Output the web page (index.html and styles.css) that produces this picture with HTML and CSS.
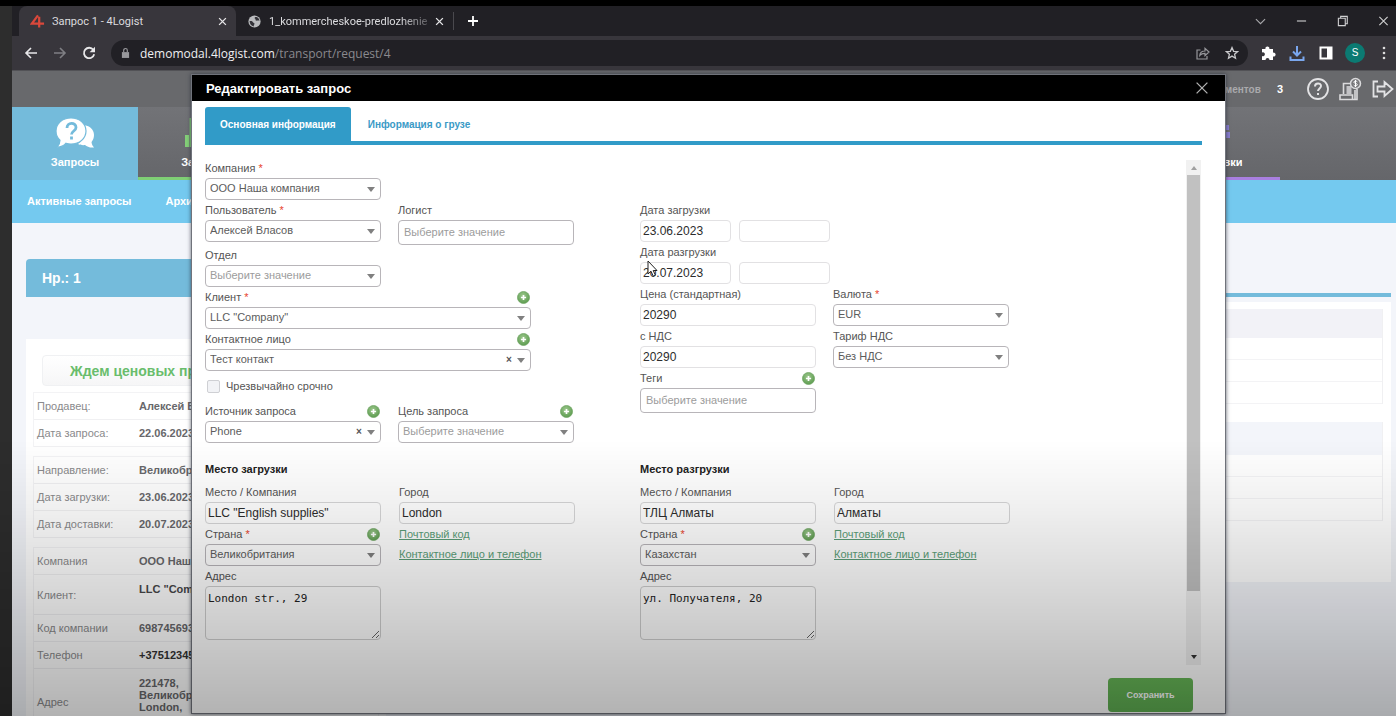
FILE: index.html
```html
<!DOCTYPE html>
<html lang="ru">
<head>
<meta charset="utf-8">
<title>Запрос 1 - 4Logist</title>
<link rel="stylesheet" href="styles.css">
</head>
<body>
<svg class="defs" aria-hidden="true">
  <defs>
    <radialGradient id="plus-fill" cx="45%" cy="35%" r="65%"><stop offset="0" stop-color="#9cc78c"/><stop offset="1" stop-color="#5d9c50"/></radialGradient>
    <symbol id="plus" viewBox="0 0 14 14"><circle cx="7" cy="7" r="6.5" fill="url(#plus-fill)" stroke="#6fa463" stroke-width=".8"/><path d="M7 4.200v5.600M4.200 7h5.600" stroke="#fff" stroke-width="1.800"/></symbol>
    <symbol id="close" viewBox="0 0 12 12"><path d="M1.500 1.500l9 9M10.500 1.500l-9 9" fill="none" stroke="currentColor" stroke-width="1.800"/></symbol>
  </defs>
</svg>

<div class="window">
  <header class="tabstrip">
    <div class="tab tab-active">
      <svg class="fav" viewBox="0 0 16 16"><path d="M8.500 1.500L2 10.200h13M9.800 3v11.500" fill="none" stroke="#d9483b" stroke-width="2.400"/></svg>
      <span class="tab-title">Запрос 1 - 4Logist</span>
      <button class="tab-close" aria-label="Закрыть вкладку"><svg viewBox="0 0 12 12"><use href="#close"/></svg></button>
    </div>
    <div class="tab">
      <svg class="fav" viewBox="0 0 16 16"><circle cx="8" cy="8" r="6.500" fill="#b9babd"/><path d="M2.800 7.500c2-.3 3 .2 3.600 1.200.5.900 1.600.6 1.600 1.800 0 .9-.8 1-.8 2.700-2.600-.3-4.500-2.800-4.400-5.700zM9.500 2.800c-1.600.7-1.700 1.600-.8 2.200.9.600-.2 1.400.9 2 1 .5 2-.5 3.700.2-.2-2.400-1.600-3.900-3.800-4.400z" fill="#333238"/></svg>
      <span class="tab-title tab-fade">1_kommercheskoe-predlozhenie</span>
      <button class="tab-close" aria-label="Закрыть вкладку"><svg viewBox="0 0 12 12"><use href="#close"/></svg></button>
    </div>
    <button class="new-tab" aria-label="Новая вкладка"><svg viewBox="0 0 12 12"><path d="M6 1v10M1 6h10" stroke="#fff" stroke-width="1.800"/></svg></button>
    <div class="win-buttons">
      <button aria-label="Поиск вкладок"><svg viewBox="0 0 12 12"><path d="M1 4l5 5 5-5" fill="none" stroke="#a9a9ac" stroke-width="1.200"/></svg></button>
      <button aria-label="Свернуть"><svg viewBox="0 0 12 12"><path d="M1 6h10" stroke="#d0d0d2" stroke-width="1.200"/></svg></button>
      <button aria-label="Окно"><svg viewBox="0 0 12 12"><path d="M1.500 3h7.500v8H1.500zM4 3V1h7.200v8H9" fill="none" stroke="#d0d0d2" stroke-width="1.200"/></svg></button>
      <button aria-label="Закрыть"><svg viewBox="0 0 12 12"><path d="M1.500 1.500l9 9M10.500 1.500l-9 9" stroke="#d0d0d2" stroke-width="1.200"/></svg></button>
    </div>
  </header>

  <div class="toolbar">
    <button class="nav-btn" aria-label="Назад"><svg viewBox="0 0 14 14"><path d="M13 7H2M7 2L2 7l5 5" fill="none" stroke="#e8e8ea" stroke-width="1.600"/></svg></button>
    <button class="nav-btn" aria-label="Вперёд"><svg viewBox="0 0 14 14"><path d="M1 7h11M7 2l5 5-5 5" fill="none" stroke="#7f7f84" stroke-width="1.600"/></svg></button>
    <button class="nav-btn" aria-label="Обновить"><svg viewBox="0 0 14 14"><path d="M11.300 3.800A5.200 5.200 0 1 0 12.200 8.300" fill="none" stroke="#e8e8ea" stroke-width="1.800"/><path d="M13 .8v5.400H7.600z" fill="#e8e8ea"/></svg></button>
    <div class="omnibox">
      <svg class="lock" viewBox="0 0 10 12"><path d="M1 5h8v6.500H1z" fill="#98989c"/><path d="M3 5V3a2 2 0 0 1 4 0v2" fill="none" stroke="#98989c" stroke-width="1.300"/></svg>
      <span class="url"><b>demomodal.4logist.com</b>/transport/request/4</span>
      <svg class="omni-icon" viewBox="0 0 14 14"><path d="M4.500 4H1v9h10v-3M3.800 9.500C4 6.500 6 5 9 5V2.300L13 6 9 9.700V7.300C6.800 7.200 5 8 3.800 9.500z" fill="none" stroke="#97979b" stroke-width="1.200"/></svg>
      <svg class="omni-icon" viewBox="0 0 14 14"><path d="M7 1.600l1.600 3.700 4 .3-3 2.700.9 3.900L7 10.100l-3.500 2.100.9-3.900-3-2.700 4-.3z" fill="none" stroke="#c9c9cc" stroke-width="1.300"/></svg>
    </div>
    <div class="ext">
      <svg viewBox="0 0 16 16"><path d="M2 4h3.500a2 2 0 1 1 3.800 0H13v3.700a2 2 0 1 1 0 3.800V15H9.500a2 2 0 1 0-4 0H2v-4a2 2 0 1 0 0-3.600z" fill="#fff"/></svg>
      <svg viewBox="0 0 16 16"><path d="M8 1v9M4 6.500l4 4 4-4M1.500 11.500V15h13v-3.500" fill="none" stroke="#7aa7ee" stroke-width="2"/></svg>
      <svg viewBox="0 0 16 16"><path d="M2.500 2.500h11v11h-11z" fill="none" stroke="#fff" stroke-width="2"/><path d="M9 2h5v12H9z" fill="#fff"/></svg>
      <span class="avatar">S</span>
      <svg viewBox="0 0 16 16"><circle cx="8" cy="3" r="1.300" fill="#ddd"/><circle cx="8" cy="8" r="1.300" fill="#ddd"/><circle cx="8" cy="13" r="1.300" fill="#ddd"/></svg>
    </div>
  </div>

  <div class="page">
    <div class="app-top">
      <span class="docs">Документов</span>
      <b class="count">3</b>
      <svg viewBox="0 0 24 24"><circle cx="12" cy="12" r="10" fill="none" stroke="#e3e3e5" stroke-width="1.800"/><path d="M9 9.500c0-4 6-4 6-.4 0 2.400-3 2.400-3 5M12 16v2" fill="none" stroke="#e3e3e5" stroke-width="2"/></svg>
      <svg viewBox="0 0 24 24"><path d="M5.500 17V6.500H13M17 13v9M2 18h12.500v4.500H2zM14.500 22.500H19V12" fill="none" stroke="#dadadc" stroke-width="1.600"/><path d="M8.500 9h5v8h-5z" fill="#c3c3c6"/><circle cx="17.500" cy="6.500" r="5" fill="#77777a" stroke="#dadadc" stroke-width="1.500"/><path d="M19.300 4.800c-.6-1-3.500-1-3.500.4s3.500 1 3.500 2.500-3 1.600-3.600.4M17.500 3v7" fill="none" stroke="#fff" stroke-width="1"/></svg>
      <svg viewBox="0 0 24 24"><path d="M8 4.500H3.500v15H8M7.500 9.500h7V5l8 7-8 7v-4.500h-7z" fill="none" stroke="#e3e3e5" stroke-width="1.800"/></svg>
    </div>
    <nav class="main-nav">
      <a class="nav-item nav-active" href="#"><svg viewBox="0 0 40 32"><path d="M27 8c7 0 12 4 12 10 0 3-1 5-2.500 7 .3 2.500 1.200 4 2.500 5.500-4 .5-7-.8-9-2.500-1 .3-5 .3-7-1 7-4 9-12 4-19z" fill="#fff"/><path d="M16 1c9 0 15 6 15 13s-6 13-15 13c-2 0-3.500-.3-5-.8-2 2.500-5 4-9 4 2-2 3-4 3-7C2.500 21 1 18 1 14 1 7 7 1 16 1z" fill="#fff" stroke="#74bbdb" stroke-width="1.200"/><path d="M12 11c0-6 9-6 9-.5 0 3.500-4.500 3.500-4.500 7M16.500 19.500v3" fill="none" stroke="#74bbdb" stroke-width="2.800"/></svg><span>Запросы</span></a>
      <a class="nav-item nav-green" href="#"><svg viewBox="0 0 40 32"><path d="M4 18h4v12H4zM8.600 1H17v29H8.600zM20 10h8v20h-8z" fill="#84cf78"/></svg><span>Заказы</span></a>
      <a class="nav-item nav-purple" href="#"><svg viewBox="0 0 40 32"><path d="M7 7h19v14H7zM28 8h4v5h-4zM29 15h4v6h-4z" fill="#8a7fd0"/></svg><span>Доставки</span></a>
    </nav>
    <nav class="sub-nav"><a href="#">Активные запросы</a><a href="#">Архив запросов</a></nav>

    <main class="content">
      <section class="request">
        <h1 class="request-title">Нр.: 1</h1>
        <div class="card">
          <div class="status">Ждем ценовых предложений</div>
          <table class="info">
            <tr><th>Продавец:</th><td>Алексей Власов</td></tr>
            <tr><th>Дата запроса:</th><td>22.06.2023</td></tr>
          </table>
          <table class="info">
            <tr><th>Направление:</th><td>Великобритания</td></tr>
            <tr><th>Дата загрузки:</th><td>23.06.2023</td></tr>
            <tr><th>Дата доставки:</th><td>20.07.2023</td></tr>
          </table>
          <table class="info">
            <tr><th>Компания</th><td>ООО Наша компания</td></tr>
            <tr class="row-mid"><th>Клиент:</th><td>LLC "Company"</td></tr>
            <tr><th>Код компании</th><td>698745693</td></tr>
            <tr><th>Телефон</th><td class="dark">+375123456</td></tr>
            <tr class="row-tall"><th>Адрес</th><td>221478,<br>Великобритания,<br>London,</td></tr>
          </table>
        </div>
      </section>
      <section class="details">
        <div class="details-line"></div>
        <div class="panel">
          <div class="grid-block"><div class="grid-head"></div><div class="grid-row"></div><div class="grid-row"></div><div class="grid-row"></div></div>
          <div class="grid-block"><div class="grid-head grid-head-tall"></div><div class="grid-row"></div><div class="grid-row"></div><div class="grid-row"></div></div>
        </div>
      </section>
    </main>

    <div class="modal" role="dialog" aria-labelledby="modal-title">
      <div class="modal-head">
        <h2 id="modal-title">Редактировать запрос</h2>
        <button class="modal-close" aria-label="Закрыть"><svg viewBox="0 0 12 12"><path d="M.6.600l10.800 10.800M11.400.600L.6 11.400" stroke="#b0b0b0" stroke-width="1.300"/></svg></button>
      </div>
      <div class="modal-tabs">
        <button class="mtab mtab-active">Основная информация</button>
        <button class="mtab">Информация о грузе</button>
      </div>
      <div class="modal-body">
        <form class="form" id="request-form">
          <div class="half">
            <div class="pair">
              <div class="field"><div class="cap"><label for="company">Компания <i>*</i></label></div><div class="sel"><select id="company"><option>ООО Наша компания</option></select></div></div>
            </div>
            <div class="pair">
              <div class="field"><div class="cap"><label for="user">Пользователь <i>*</i></label></div><div class="sel"><select id="user"><option>Алексей Власов</option></select></div></div>
              <div class="field"><div class="cap"><label for="logist">Логист</label></div><input class="multi" id="logist" placeholder="Выберите значение"></div>
            </div>
            <div class="pair">
              <div class="field"><div class="cap"><label for="dept">Отдел</label></div><div class="sel"><select class="empty" id="dept"><option>Выберите значение</option></select></div></div>
            </div>
            <div class="field field-wide"><div class="cap"><label for="client">Клиент <i>*</i></label><button type="button" class="add" aria-label="Добавить клиента"><svg><use href="#plus"/></svg></button></div><div class="sel"><select id="client"><option>LLC "Company"</option></select></div></div>
            <div class="field field-wide"><div class="cap"><label for="contact">Контактное лицо</label><button type="button" class="add" aria-label="Добавить контакт"><svg><use href="#plus"/></svg></button></div><div class="sel"><select id="contact"><option>Тест контакт</option></select><button type="button" class="clear">×</button></div></div>
            <div class="check"><input type="checkbox" id="urgent"><label for="urgent">Чрезвычайно срочно</label></div>
            <div class="pair">
              <div class="field"><div class="cap"><label for="source">Источник запроса</label><button type="button" class="add" aria-label="Добавить источник"><svg><use href="#plus"/></svg></button></div><div class="sel"><select id="source"><option>Phone</option></select><button type="button" class="clear">×</button></div></div>
              <div class="field"><div class="cap"><label for="goal">Цель запроса</label><button type="button" class="add" aria-label="Добавить цель"><svg><use href="#plus"/></svg></button></div><div class="sel"><select class="empty" id="goal"><option>Выберите значение</option></select></div></div>
            </div>
          </div>

          <div class="half half-right">
            <div class="dates"><div class="cap"><label for="load-date">Дата загрузки</label></div><input id="load-date" value="23.06.2023"><input aria-label="Время загрузки"></div>
            <div class="dates"><div class="cap"><label for="unload-date">Дата разгрузки</label></div><input id="unload-date" value="20.07.2023"><input aria-label="Время разгрузки">
              <svg class="cursor" viewBox="0 0 12 18"><path d="M1 1v13l3-2.800 2.200 5 2.200-1-2.200-4.700H10z" fill="#fff" stroke="#222" stroke-width="1"/></svg>
            </div>
            <div class="pair">
              <div class="field"><div class="cap"><label for="price">Цена (стандартная)</label></div><input id="price" value="20290"></div>
              <div class="field"><div class="cap"><label for="currency">Валюта <i>*</i></label></div><div class="sel"><select id="currency"><option>EUR</option></select></div></div>
            </div>
            <div class="pair">
              <div class="field"><div class="cap"><label for="vat">с НДС</label></div><input id="vat" value="20290"></div>
              <div class="field"><div class="cap"><label for="rate">Тариф НДС</label></div><div class="sel"><select id="rate"><option>Без НДС</option></select></div></div>
            </div>
            <div class="pair">
              <div class="field"><div class="cap"><label for="tags">Теги</label><button type="button" class="add" aria-label="Добавить тег"><svg><use href="#plus"/></svg></button></div><input class="multi" id="tags" placeholder="Выберите значение"></div>
            </div>
          </div>

          <fieldset class="place">
            <legend>Место загрузки</legend>
            <div class="pair pair-place">
              <div class="field"><div class="cap"><label for="from-place">Место / Компания</label></div><input id="from-place" value='LLC "English supplies"'></div>
              <div class="field"><div class="cap"><label for="from-city">Город</label></div><input id="from-city" value="London"></div>
              <div class="field"><div class="cap"><label for="from-country">Страна <i>*</i></label><button type="button" class="add" aria-label="Добавить страну"><svg><use href="#plus"/></svg></button></div><div class="sel"><select id="from-country"><option>Великобритания</option></select></div></div>
              <div class="links"><a href="#">Почтовый код</a><a href="#">Контактное лицо и телефон</a></div>
              <div class="field"><div class="cap"><label for="from-address">Адрес</label></div><textarea id="from-address">London str., 29</textarea></div>
            </div>
          </fieldset>
          <fieldset class="place">
            <legend>Место разгрузки</legend>
            <div class="pair pair-place">
              <div class="field"><div class="cap"><label for="to-place">Место / Компания</label></div><input id="to-place" value="ТЛЦ Алматы"></div>
              <div class="field"><div class="cap"><label for="to-city">Город</label></div><input id="to-city" value="Алматы"></div>
              <div class="field"><div class="cap"><label for="to-country">Страна <i>*</i></label><button type="button" class="add" aria-label="Добавить страну"><svg><use href="#plus"/></svg></button></div><div class="sel"><select id="to-country"><option>Казахстан</option></select></div></div>
              <div class="links"><a href="#">Почтовый код</a><a href="#">Контактное лицо и телефон</a></div>
              <div class="field"><div class="cap"><label for="to-address">Адрес</label></div><textarea id="to-address">ул. Получателя, 20</textarea></div>
            </div>
          </fieldset>
        </form>
        <div class="scroll" aria-hidden="true"><span class="arrow-up"></span><span class="thumb"></span><span class="arrow-down"></span></div>
      </div>
      <div class="modal-foot"><button class="save" form="request-form">Сохранить</button></div>
    </div>
  </div>
</div>
<div class="shade"></div>
</body>
</html>
```
FILE: styles.css
```css
* { box-sizing: border-box; }
body {
  margin: 0;
  height: 100vh;
  overflow: hidden;
  background: #2d2d2d;
  border-top: 6px solid #000;
  font-family: "Liberation Sans", Arial, sans-serif;
  font-size: 11px;
  color: #555;
}
button { margin: 0; padding: 0; border: 0; background: none; font: inherit; color: inherit; }
.defs { position: absolute; width: 0; height: 0; }
.window { margin-left: 12px; height: 100%; display: flex; flex-direction: column; }

/* browser chrome */
.tabstrip { height: 30px; flex: none; display: flex; align-items: center; background: #212025; padding-left: 7px; font-family: Roboto, "Noto Sans", sans-serif; color: #dcdcdf; }
.tab { display: flex; align-items: center; gap: 7px; height: 30px; width: 217px; padding: 0 9px 0 11px; border-radius: 8px 8px 0 0; }
.tab-active { background: #38363c; }
.tab .fav { width: 15px; height: 15px; flex: none; }
.tab-title { flex: 1; min-width: 0; white-space: nowrap; overflow: hidden; }
.tab-fade { -webkit-mask-image: linear-gradient(90deg, #000 82%, rgba(0, 0, 0, .3)); mask-image: linear-gradient(90deg, #000 82%, rgba(0, 0, 0, .3)); }
.tab-close { width: 9px; height: 9px; display: flex; color: #e6e6e8; flex: none; }
.tab-close svg { width: 9px; height: 9px; }
.new-tab { width: 39px; height: 18px; border-left: 1px solid #4a494e; display: flex; align-items: center; justify-content: center; }
.new-tab svg { width: 12px; height: 12px; }
.win-buttons { margin-left: auto; display: flex; gap: 30px; padding-right: 7px; }
.win-buttons button { width: 11px; height: 12px; display: flex; }
.toolbar { height: 34px; flex: none; display: flex; align-items: center; background: #38363c; padding: 0 4px 0 12px; }
.nav-btn { width: 14px; height: 14px; margin-right: 15px; display: flex; }
.nav-btn svg { width: 14px; height: 14px; }
.omnibox { flex: 1; height: 26px; border-radius: 13px; background: #212025; display: flex; align-items: center; padding: 0 9px 0 10px; margin-right: 12px; }
.lock { width: 9px; height: 12px; margin-right: 10px; }
.url { flex: 1; font: 12px "Open Sans", "Noto Sans", sans-serif; color: #8a898e; }
.url b { font-weight: 400; color: #efeff1; }
.omni-icon { width: 14px; height: 14px; margin-left: 15px; }
.ext { display: flex; align-items: center; gap: 13px; }
.ext svg { width: 16px; height: 16px; }
.avatar { width: 20px; height: 20px; border-radius: 50%; background: #0b7a72; color: #fff; text-align: center; line-height: 20px; font-size: 10px; margin: 0 -2px; }

/* application behind the dialog */
.page { position: relative; flex: 1; min-height: 0; overflow: hidden; background: #f3f5fa; border-top: 1px solid #525256; }
.app-top { height: 36px; background: #68696c; display: flex; align-items: center; justify-content: flex-end; gap: 8px; padding-right: 2px; }
.app-top svg { width: 24px; height: 24px; }
.docs { font-size: 10px; font-weight: 700; color: #aaaaad; margin-right: 8px; }
.count { font-size: 11px; color: #fff; margin-right: 15px; }
.main-nav { height: 73px; background: linear-gradient(#727377, #65666a); display: flex; }
.nav-item { width: 126px; display: flex; flex-direction: column; align-items: center; gap: 5px; padding-top: 10px; color: #fff; font-weight: 700; text-decoration: none; line-height: 16px; border-bottom: 3px solid transparent; }
.nav-item svg { width: 40px; height: 32px; }
.nav-active { background: #74bbdb; border-color: #74bbdb; }
.nav-green { border-color: #7fcf75; }
.nav-purple { border-color: #a97fe0; margin-left: auto; margin-right: 116px; }
.sub-nav { height: 43px; background: #74c9ef; display: flex; align-items: center; gap: 34px; padding: 0 0 2px 15px; }
.sub-nav a { color: #fff; font-weight: 700; text-decoration: none; }
.content { display: flex; gap: 20px; padding: 36px 5px 0 14px; }
.request { width: 360px; flex: none; }
.request-title { margin: 0; height: 38px; line-height: 38px; padding-left: 16px; border-radius: 4px 4px 0 0; background: #74bbdb; color: #fff; font-size: 14px; }
.card { margin-top: 42px; padding: 16px 7px; background: #fff; }
.status { margin: 0 9px 6px; height: 31px; line-height: 31px; padding-left: 27px; white-space: nowrap; border: 1px solid #f0f1f3; border-radius: 4px; background: linear-gradient(#fff, #f6f6f7); color: #69bd6c; font-size: 14px; font-weight: 700; }
.info { width: 100%; margin-bottom: 9px; border-collapse: separate; border-spacing: 0; border: 1px solid #f3f3f5; border-bottom: 0; }
.info th, .info td { height: 27px; line-height: 12px; border-bottom: 1px solid #f0f0f2; padding: 0 3px; text-align: left; }
.info th { width: 102px; font-weight: 400; color: #8a8a8c; }
.info td { font-weight: 700; color: #68686b; }
.info td.dark { color: #333; }
.info .row-mid > * { height: 40px; }
.info .row-tall > * { height: 66px; }
.info .row-mid td, .info .row-tall td { vertical-align: top; padding-top: 8px; }
.info .row-mid td { color: #48484a; }
.details { flex: 1; padding-top: 34px; }
.details-line { height: 4px; background: #74bbdb; }
.panel { margin-top: 5px; background: #fff; padding: 7px 8px 61px; display: grid; gap: 18px; }
.grid-block { border-right: 1px solid #f0f0f2; }
.grid-head { height: 29px; background: #f2f2f7; }
.grid-head-tall { height: 33px; background: #f3f5fa; }
.grid-row { height: 22px; border-bottom: 1px solid #f3f3f5; }

/* dialog */
.modal { position: absolute; top: 3px; right: 170px; bottom: 2px; left: 179px; display: flex; flex-direction: column; background: #fff; border: 1px solid #70737b; box-shadow: 0 0 4px rgba(30, 35, 50, .7); }
.modal-head { height: 26px; flex: none; display: flex; align-items: center; justify-content: space-between; background: #000; padding: 0 17px 0 14px; }
.modal-head h2 { margin: 0; font-size: 13px; color: #fff; }
.modal-close { width: 12px; height: 12px; display: flex; }
.modal-tabs { margin: 6px 23px 0 13px; flex: none; display: flex; border-bottom: 4px solid #319bc8; }
.mtab { height: 34px; padding: 0 15px; border-radius: 3px 3px 0 0; font-size: 10px; font-weight: 700; color: #3a9ac6; }
.mtab + .mtab { padding-left: 17px; }
.mtab-active { background: #319bc8; color: #fff; }
.modal-body { flex: 1; min-height: 0; display: flex; align-items: flex-start; padding: 13px 24px 0 13px; }
.form { flex: 1; display: grid; grid-template-columns: 435px 1fr; }
.pair { display: grid; grid-template-columns: 176px 176px; column-gap: 17px; }
.pair-place { column-gap: 18px; }
.field { width: 176px; }
.field-wide { width: 326px; }
.cap { height: 20px; display: flex; align-items: center; justify-content: space-between; padding-right: 1px; }
.cap label { line-height: 20px; white-space: nowrap; }
.cap i { color: #e8432f; font-style: normal; }
.add { width: 13px; height: 13px; display: flex; }
.add svg { width: 13px; height: 13px; }
.sel { position: relative; height: 22px; }
.sel::after { content: ""; position: absolute; right: 6px; top: 9px; border: 4px solid transparent; border-top: 5px solid #808080; border-bottom: 0; }
select { appearance: none; display: block; width: 100%; height: 22px; padding: 0 20px 2px 4px; border: 1px solid #b8b5b9; border-radius: 4px; background: transparent; font: 11px "Liberation Sans", Arial, sans-serif; color: #5c5c5c; }
select.empty, input::placeholder { color: #9c9c9c; }
.clear { position: absolute; right: 17px; top: 4px; width: 10px; line-height: 14px; font-size: 10px; font-weight: 700; color: #555; }
input { display: block; width: 100%; height: 22px; padding: 0 2px 1px; border: 1px solid #e2e1e3; border-radius: 4px; background: transparent; font: 12px "Liberation Sans", Arial, sans-serif; color: #2c2c2c; }
input.multi { height: 25px; padding: 0 5px 2px; border-color: #b8b5b9; font-size: 11px; }
.check { height: 30px; display: flex; align-items: center; gap: 6px; padding-left: 2px; }
.check input { appearance: none; flex: none; width: 13px; height: 13px; margin: 0; border: 1px solid #cfd0d4; border-radius: 2px; background: #f2f3f6; }
.half-right { padding-top: 42px; }
.dates { position: relative; display: grid; grid-template-columns: 91px 91px; column-gap: 8px; }
.dates .cap { grid-column: 1 / -1; }
.cursor { position: absolute; left: 7px; top: 18px; width: 12px; height: 18px; }
.place { margin: 0; padding: 16px 0 0; border: 0; min-width: 0; }
.place legend { float: left; width: 100%; padding: 0; height: 23px; line-height: 20px; font-weight: 700; color: #222; }
.place .pair { clear: both; }
.place input { border-color: #d6d6d7; background: rgba(255, 255, 255, .3); }
.links { display: flex; flex-direction: column; align-items: flex-start; line-height: 20px; }
.links a { color: #5b9e78; white-space: nowrap; }
textarea { display: block; width: 100%; height: 54px; padding: 5px 2px; border: 1px solid #cfcfcf; border-radius: 4px; background: transparent; font: 11px "DejaVu Sans Mono", monospace; color: #222; }
.scroll { width: 15px; height: 505px; margin-top: 2px; flex: none; display: flex; flex-direction: column; align-items: center; background: #f1f1f1; }
.arrow-up { margin: 6px 0 5px; border: 3px solid transparent; border-bottom: 4px solid #a0a0a0; border-top: 0; }
.thumb { width: 13px; height: 416px; background: #c1c1c1; }
.arrow-down { margin-top: auto; margin-bottom: 6px; border: 3px solid transparent; border-top: 4px solid #333; border-bottom: 0; }
.modal-foot { flex: none; display: flex; justify-content: flex-end; padding: 0 32px 1px; }
.save { width: 85px; height: 34px; border-radius: 4px; background: linear-gradient(#67b757, #5fae52); color: #fff; font-size: 9px; font-weight: 700; }
.shade { position: fixed; inset: 440px 0 0; pointer-events: none; background: linear-gradient(transparent, rgba(0, 0, 0, .06) 24%, rgba(0, 0, 0, .3)); }
```
